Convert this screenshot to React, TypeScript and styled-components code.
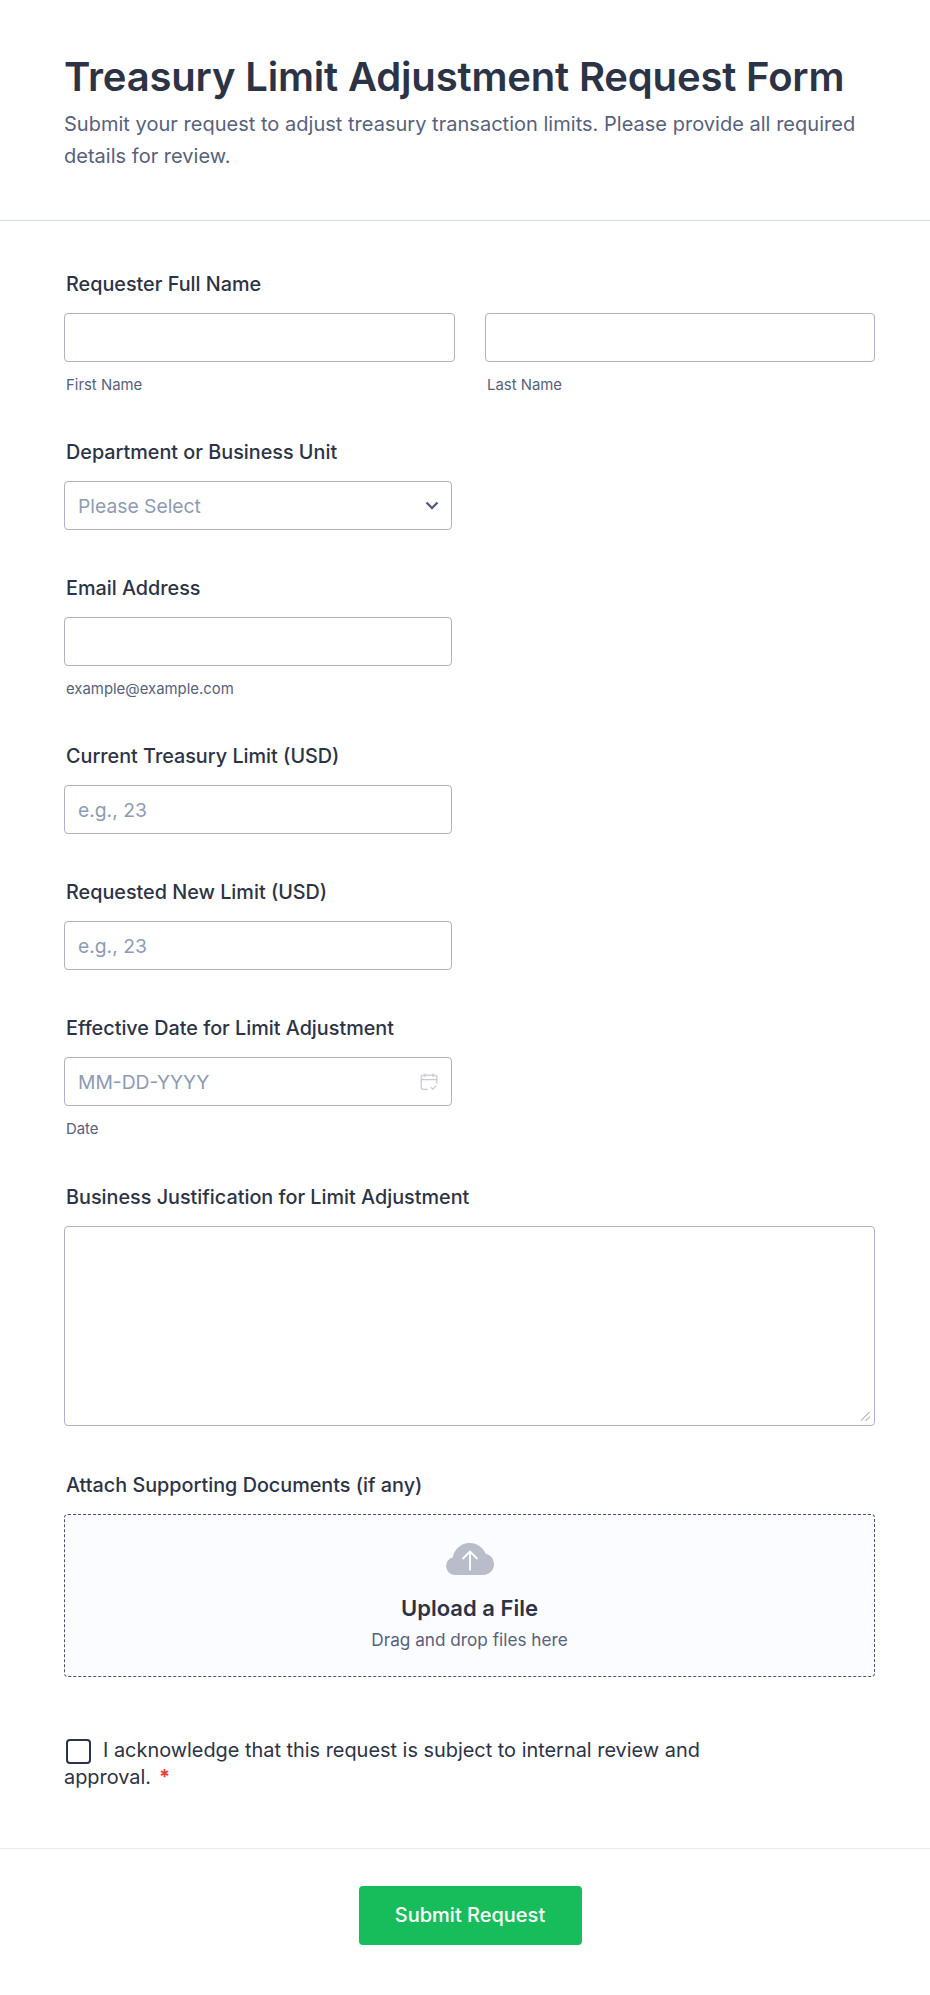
import {FC} from 'react';
import styled, {createGlobalStyle} from 'styled-components';

const GlobalStyle = createGlobalStyle`
  * {
    box-sizing: border-box;
  }

  body {
    margin: 0;
    background-color: #fff;
    font-family: Inter, sans-serif;
    color: #2c3345;
  }
`

const App: FC = () => {
    return (
        <Page>
            <GlobalStyle/>
            <Header>
                <Title>Treasury Limit Adjustment Request Form</Title>
                <Subtitle>Submit your request to adjust treasury transaction limits. Please provide all required
                    details for review.</Subtitle>
            </Header>
            <Form>
                <Field>
                    <Label>Requester Full Name</Label>
                    <NameRow>
                        <div>
                            <TextInput type="text"/>
                            <SubLabel>First Name</SubLabel>
                        </div>
                        <div>
                            <TextInput type="text"/>
                            <SubLabel>Last Name</SubLabel>
                        </div>
                    </NameRow>
                </Field>
                <Field>
                    <Label>Department or Business Unit</Label>
                    <ShortBox>
                        <Placeholder>Please Select</Placeholder>
                        <svg width="14" height="9" viewBox="0 0 14 9" fill="none">
                            <path d="M1.500 1.500 7 7l5.500-5.500" stroke="#565f78" strokeWidth="2.400"/>
                        </svg>
                    </ShortBox>
                </Field>
                <Field>
                    <Label>Email Address</Label>
                    <ShortInput type="email"/>
                    <SubLabel>example@example.com</SubLabel>
                </Field>
                <Field>
                    <Label>Current Treasury Limit (USD)</Label>
                    <ShortInput type="text" placeholder="e.g., 23"/>
                </Field>
                <Field>
                    <Label>Requested New Limit (USD)</Label>
                    <ShortInput type="text" placeholder="e.g., 23"/>
                </Field>
                <Field>
                    <Label>Effective Date for Limit Adjustment</Label>
                    <ShortBox>
                        <Placeholder>MM-DD-YYYY</Placeholder>
                        <CalendarIcon width="18" height="18" viewBox="0 0 18 18" fill="none" stroke="#c6cad6" strokeWidth="1.300">
                            <path d="M7.500 16.300H3.200a2 2 0 0 1-2-2V4.200a2 2 0 0 1 2-2h11.600a2 2 0 0 1 2 2v6.300"/>
                            <path d="M1.200 6.600h15.600M5 .5v3.400M13 .5v3.400"/>
                            <path d="m10.800 14.200 2 2 3.600-3.600"/>
                        </CalendarIcon>
                    </ShortBox>
                    <SubLabel>Date</SubLabel>
                </Field>
                <Field>
                    <Label>Business Justification for Limit Adjustment</Label>
                    <TextArea/>
                </Field>
                <Field>
                    <Label>Attach Supporting Documents (if any)</Label>
                    <UploadArea>
                        <svg width="48" height="32" viewBox="0 0 48 32">
                            <path fill="#b8bdc9"
                                  d="M9 32a9 9 0 0 1-2.200-17.700A17 17 0 0 1 24 0c7 0 12.900 4.300 15.500 10.400A10.800 10.800 0 0 1 48 21.200 10.800 10.800 0 0 1 37.200 32z"/>
                            <path fill="none" stroke="#fff" strokeWidth="1.800" d="M24 27.500V8.500M16.500 16 24 8.500 31.500 16"/>
                        </svg>
                        <UploadTitle>Upload a File</UploadTitle>
                        <UploadHint>Drag and drop files here</UploadHint>
                    </UploadArea>
                </Field>
                <Acknowledge>
                    <CheckBox type="checkbox"/>
                    I acknowledge that this request is subject to internal review and approval.
                    <Required>*</Required>
                </Acknowledge>
            </Form>
            <Footer>
                <SubmitButton type="button">Submit Request</SubmitButton>
            </Footer>
        </Page>
    );
};

const Page = styled.div`
  width: 930px;
  height: 1995px;
  background-color: #fff;
`

const Header = styled.div`
  padding: 53px 40px 48px 64px;
  border-bottom: 1px solid #dadce6;
`

const Title = styled.h1`
  margin: 0;
  font-size: 40px;
  line-height: 48px;
  font-weight: 600;
  letter-spacing: -0.17px;
  color: #2c3345;
`

const Subtitle = styled.p`
  margin: 7px 0 0;
  font-size: 20px;
  line-height: 32px;
  letter-spacing: 0.02px;
  color: #57617c;
`

const Form = styled.div`
  display: flex;
  flex-direction: column;
  gap: 46px;
  padding: 51px 55px 0 64px;
`

const Field = styled.div`
  display: flex;
  flex-direction: column;
`

const Label = styled.div`
  margin: 0 0 17px 2px;
  font-size: 19.800px;
  line-height: 24px;
  font-weight: 500;
  color: #2c3345;
`

const SubLabel = styled.div`
  margin: 14px 0 0 2px;
  font-size: 14.900px;
  line-height: 18.200px;
  color: #57617c;
`

const NameRow = styled.div`
  display: grid;
  grid-template-columns: 391px 390px;
  column-gap: 30px;
`

const TextInput = styled.input`
  display: block;
  width: 100%;
  height: 49px;
  padding: 0 13px;
  background-color: #fff;
  border: 1px solid #adb2c6;
  border-radius: 4px;
  font-family: Inter, sans-serif;
  font-size: 19.300px;
  color: #2c3345;
  outline: none;

  &::placeholder {
    color: #8d9bb3;
    opacity: 1;
  }
`

const ShortInput = styled(TextInput)`
  width: 388px;
`

const ShortBox = styled.div`
  display: flex;
  align-items: center;
  justify-content: space-between;
  width: 388px;
  height: 49px;
  padding: 0 12px 0 13px;
  background-color: #fff;
  border: 1px solid #adb2c6;
  border-radius: 4px;
`

const CalendarIcon = styled.svg`
  margin-right: 1px;
`

const Placeholder = styled.span`
  font-size: 19.300px;
  color: #8d9bb3;
`

const TextArea = styled.textarea`
  display: block;
  width: 100%;
  height: 200px;
  margin-bottom: 1px;
  padding: 12px;
  background-color: #fff;
  border: 1px solid #adb2c6;
  border-radius: 4px;
  font-family: Inter, sans-serif;
  font-size: 18px;
  outline: none;

  &::-webkit-resizer {
    background: linear-gradient(135deg, transparent 43%, #c5c8d4 43%, #c5c8d4 55%, transparent 55%, transparent 70%, #c5c8d4 70%, #c5c8d4 81%, transparent 81%) 2px 2px / 9px 9px no-repeat;
  }
`

const UploadArea = styled.div`
  display: flex;
  flex-direction: column;
  align-items: center;
  height: 163px;
  padding-top: 28px;
  background-color: #fbfcff;
  border: 1px dashed #4c536f;
  border-radius: 4px;
`

const UploadTitle = styled.div`
  margin-top: 19px;
  font-size: 22px;
  line-height: 28px;
  font-weight: 600;
  color: #2c3345;
`

const UploadHint = styled.div`
  margin-top: 6px;
  font-size: 17.200px;
  line-height: 24px;
  color: #57617c;
`

const Acknowledge = styled.div`
  width: 660px;
  margin-top: 14px;
  font-size: 19.900px;
  line-height: 27px;
  color: #2c3345;
`

const CheckBox = styled.input`
  appearance: none;
  display: inline-block;
  width: 25px;
  height: 25px;
  margin: 0 12px 0 2px;
  vertical-align: middle;
  background-color: #fff;
  border: 2px solid #2c3345;
  border-radius: 4px;
`

const Required = styled.span`
  margin-left: 8px;
  color: #f23a3c;
  font-weight: 700;
`

const Footer = styled.div`
  display: flex;
  justify-content: center;
  margin-top: 57px;
  padding: 37px 0 0 10px;
  border-top: 1px solid #eaebf2;
`

const SubmitButton = styled.button`
  width: 223px;
  height: 59px;
  background-color: #18bd5b;
  border: none;
  border-radius: 4px;
  font-family: Inter, sans-serif;
  font-size: 20px;
  font-weight: 500;
  color: #fff;
  cursor: pointer;
`

export default App;
